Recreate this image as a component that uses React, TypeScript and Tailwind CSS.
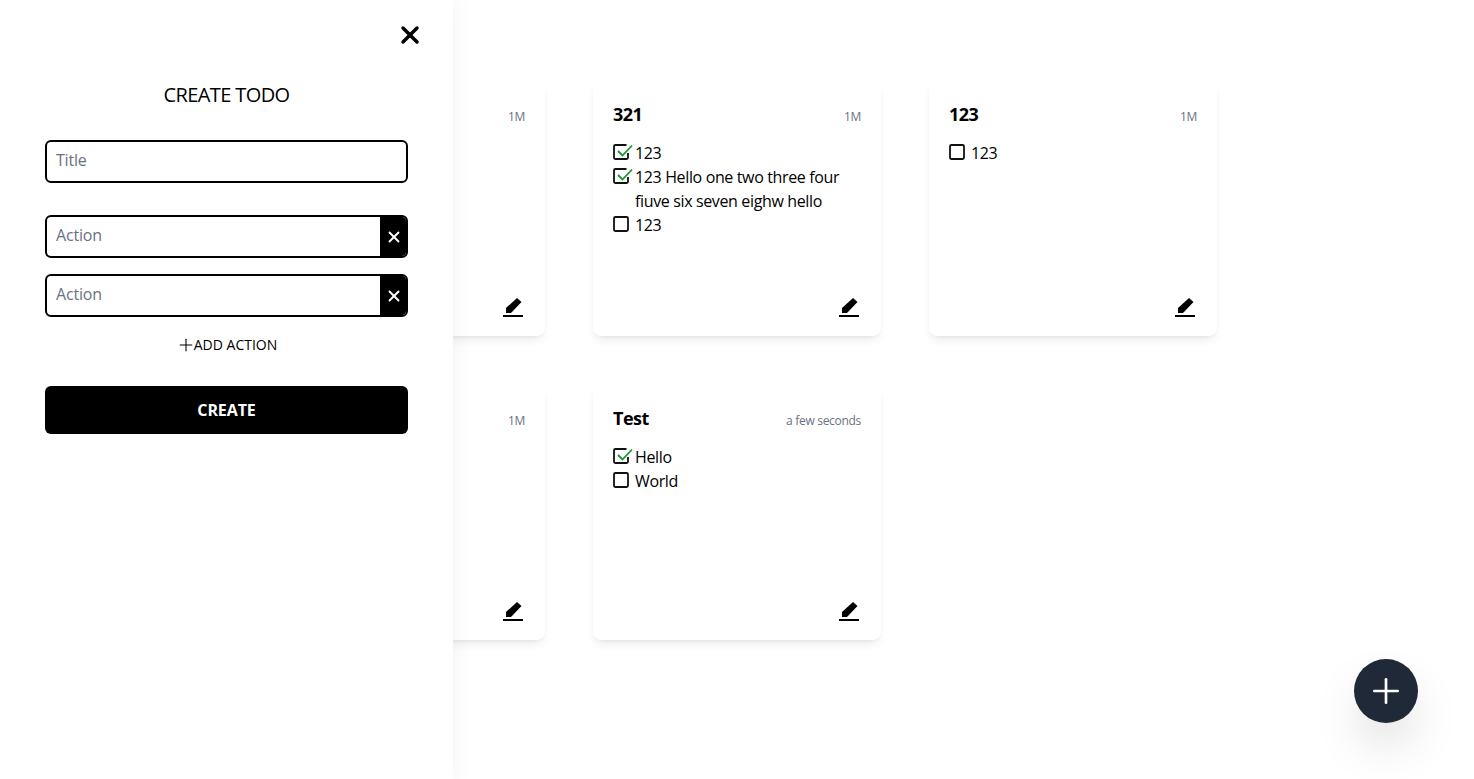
import { X, Plus } from "lucide-react";

type Action = { text: string; done: boolean };
type Todo = { title: string; age: string; actions: Action[] };

// first and fourth cards sit under the open drawer
const todos: Todo[] = [
  { title: "", age: "1M", actions: [] },
  {
    title: "321",
    age: "1M",
    actions: [
      { text: "123", done: true },
      { text: "123 Hello one two three four fiuve six seven eighw hello", done: true },
      { text: "123", done: false },
    ],
  },
  { title: "123", age: "1M", actions: [{ text: "123", done: false }] },
  { title: "", age: "1M", actions: [] },
  {
    title: "Test",
    age: "a few seconds",
    actions: [
      { text: "Hello", done: true },
      { text: "World", done: false },
    ],
  },
];

function CheckBox({ done }: { done: boolean }) {
  return (
    <svg width="20" height="18" viewBox="0 0 20 18" fill="none" className="shrink-0 mt-[2px]">
      <path
        d={done ? "M15 10V14.500a1.500 1.500 0 0 1-1.500 1.500h-11A1.500 1.500 0 0 1 1 14.500v-11A1.500 1.500 0 0 1 2.500 2H13.500" : "M2.500 2h11A1.500 1.500 0 0 1 15 3.500v11a1.500 1.500 0 0 1-1.500 1.500h-11A1.500 1.500 0 0 1 1 14.500v-11A1.500 1.500 0 0 1 2.500 2z"}
        stroke="#111"
        strokeWidth="1.800"
      />
      {done && <path d="M5 8l4.500 4.500L19 2.500" stroke="#15962c" strokeWidth="1.800" />}
    </svg>
  );
}

function EditIcon() {
  return (
    <svg width="20" height="20" viewBox="0 0 20 20" fill="currentColor">
      <path d="M14 0l4.500 4L8 15H3v-5z" />
      <rect x="0" y="17" width="20" height="2" />
    </svg>
  );
}

function TodoCard({ todo }: { todo: Todo }) {
  return (
    <div className="w-[288px] h-[256px] bg-white rounded-lg shadow-[0_6px_10px_-3px_rgba(0,0,0,0.1),0_1px_3px_-1px_rgba(0,0,0,0.06)] px-5 pt-5 pb-[18px] flex flex-col">
      <div className="flex items-center justify-between h-7">
        <h2 className="text-lg font-bold text-black tracking-[-0.5px]">{todo.title}</h2>
        <span className="text-xs text-gray-500 pt-[6px] tracking-[-0.3px]">{todo.age}</span>
      </div>
      <ul className="mt-[13px] flex-1 text-base leading-6 text-black tracking-[-0.36px]">
        {todo.actions.map((a, i) => (
          <li key={i} className="flex gap-[2px]">
            <CheckBox done={a.done} />
            <span>{a.text}</span>
          </li>
        ))}
      </ul>
      <div className="flex justify-end pr-[2px]">
        <EditIcon />
      </div>
    </div>
  );
}

function ActionInput() {
  return (
    <div className="flex h-[43px] rounded-md border-2 border-black overflow-hidden">
      <input placeholder="Action" className="flex-1 min-w-0 px-[9px] pb-1 text-base tracking-[-0.2px] outline-none placeholder:text-gray-500" />
      <button className="w-[26px] bg-black text-white flex items-center justify-center pl-[2px]">
        <X size={18} strokeWidth={2.500} />
      </button>
    </div>
  );
}

export default function App() {
  return (
    <div className="relative w-full h-[779px] overflow-hidden bg-white font-['Open_Sans','Noto_Sans',sans-serif]">
      <main className="flex flex-wrap gap-12 pl-[257px] pt-20">
        {todos.map((t, i) => (
          <TodoCard key={i} todo={t} />
        ))}
      </main>

      <aside className="absolute inset-y-0 left-0 w-[453px] bg-white shadow-[0_0_24px_rgba(0,0,0,0.06)] px-[45px] flex flex-col">
        <button className="absolute left-[396px] top-[21px] text-black">
          <X size={28} strokeWidth={3} />
        </button>
        <h1 className="mt-[81px] text-center text-xl leading-7 text-black tracking-[-0.03em]">CREATE TODO</h1>
        <input
          placeholder="Title"
          className="mt-[31px] h-[43px] rounded-md border-2 border-black px-[9px] pb-1 text-base tracking-[-0.2px] outline-none placeholder:text-gray-500"
        />
        <div className="mt-8 flex flex-col gap-4">
          <ActionInput />
          <ActionInput />
        </div>
        <button className="mt-4 flex items-center justify-center h-6 text-sm text-black">
          <Plus size={20} strokeWidth={1.300} className="-mr-[2px]" />
          <span>ADD ACTION</span>
        </button>
        <button className="mt-[29px] h-12 rounded-md bg-black text-white text-base font-bold tracking-[-0.1px]">CREATE</button>
      </aside>

      <button className="absolute left-[1354px] top-[659px] w-16 h-16 rounded-full bg-[#1f2937] text-white flex items-center justify-center shadow-2xl">
        <Plus size={40} strokeWidth={1.600} />
      </button>
    </div>
  );
}
